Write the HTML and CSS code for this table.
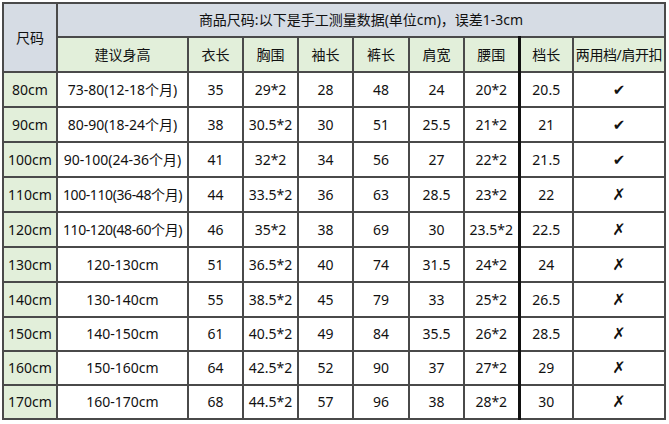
FILE: index.html
```html
<!DOCTYPE html>
<html lang="zh-CN">
<head>
<meta charset="utf-8">
<title>尺码表</title>
<link rel="stylesheet" href="styles.css">
</head>
<body>
<table class="size-table">
  <colgroup>
    <col class="c-size">
    <col class="c-height">
    <col class="c-n"><col class="c-n"><col class="c-n"><col class="c-n5">
    <col class="c-n"><col class="c-n"><col class="c-n8">
    <col class="c-opt">
  </colgroup>
  <thead>
    <tr class="r-title">
      <th rowspan="2" class="h-gray">尺码</th>
      <th colspan="9" class="h-gray title">商品尺码:以下是手工测量数据(单位cm)，误差1-3cm</th>
    </tr>
    <tr class="r-head">
      <th class="h-green">建议身高</th>
      <th class="h-green">衣长</th>
      <th class="h-green">胸围</th>
      <th class="h-green">袖长</th>
      <th class="h-green">裤长</th>
      <th class="h-green">肩宽</th>
      <th class="h-green">腰围</th>
      <th class="h-green thick">档长</th>
      <th class="h-green tight">两用档/肩开扣</th>
    </tr>
  </thead>
  <tbody>
    <tr><td class="size">80cm</td><td>73-80(12-18个月)</td><td>35</td><td>29*2</td><td>28</td><td>48</td><td>24</td><td>20*2</td><td class="thick">20.5</td><td class="mark check">✔</td></tr>
    <tr><td class="size">90cm</td><td>80-90(18-24个月)</td><td>38</td><td>30.5*2</td><td>30</td><td>51</td><td>25.5</td><td>21*2</td><td class="thick">21</td><td class="mark check">✔</td></tr>
    <tr><td class="size">100cm</td><td>90-100(24-36个月)</td><td>41</td><td>32*2</td><td>34</td><td>56</td><td>27</td><td>22*2</td><td class="thick">21.5</td><td class="mark check">✔</td></tr>
    <tr><td class="size">110cm</td><td class="tight">100-110(36-48个月)</td><td>44</td><td>33.5*2</td><td>36</td><td>63</td><td>28.5</td><td>23*2</td><td class="thick">22</td><td class="mark">✗</td></tr>
    <tr><td class="size">120cm</td><td class="tight">110-120(48-60个月)</td><td>46</td><td>35*2</td><td>38</td><td>69</td><td>30</td><td>23.5*2</td><td class="thick">22.5</td><td class="mark">✗</td></tr>
    <tr><td class="size">130cm</td><td>120-130cm</td><td>51</td><td>36.5*2</td><td>40</td><td>74</td><td>31.5</td><td>24*2</td><td class="thick">24</td><td class="mark">✗</td></tr>
    <tr><td class="size">140cm</td><td>130-140cm</td><td>55</td><td>38.5*2</td><td>45</td><td>79</td><td>33</td><td>25*2</td><td class="thick">26.5</td><td class="mark">✗</td></tr>
    <tr class="r-short"><td class="size">150cm</td><td>140-150cm</td><td>61</td><td>40.5*2</td><td>49</td><td>84</td><td>35.5</td><td>26*2</td><td class="thick">28.5</td><td class="mark">✗</td></tr>
    <tr class="r-short"><td class="size">160cm</td><td>150-160cm</td><td>64</td><td>42.5*2</td><td>52</td><td>90</td><td>37</td><td>27*2</td><td class="thick">29</td><td class="mark">✗</td></tr>
    <tr class="r-short"><td class="size">170cm</td><td>160-170cm</td><td>68</td><td>44.5*2</td><td>57</td><td>96</td><td>38</td><td>28*2</td><td class="thick">30</td><td class="mark">✗</td></tr>
  </tbody>
</table>
</body>
</html>
```
FILE: styles.css
```css
html, body {
  margin: 0;
  padding: 0;
  background: #ffffff;
}

body {
  padding: 2px 0 0 2px;
  font-family: "Noto Sans", "Noto Sans CJK SC", sans-serif;
  color: #111111;
}

.size-table {
  border-collapse: collapse;
  table-layout: fixed;
  width: 663px;
  font-size: 14px;
}

.c-size { width: 54px; }
.c-height { width: 131px; }
.c-n { width: 55px; }
.c-n5 { width: 56px; }
.c-n8 { width: 54px; }
.c-opt { width: 92px; }

.size-table th,
.size-table td {
  border: 2px solid #4a4a4a;
  padding: 0;
  text-align: center;
  vertical-align: middle;
  font-weight: normal;
  white-space: nowrap;
  overflow: hidden;
  line-height: 18px;
}

.r-title { height: 34px; }
.r-head { height: 35px; }
tbody tr { height: 35px; }
tbody tr.r-short { height: 34px; }

.h-gray { background: #d6dce4; }
.h-green { background: #e2efda; }
.size { background: #e2efda; }

.size-table .thick { border-left: 3px solid #111111; }

.tight { letter-spacing: -0.4px; }

.mark {
  font-family: "DejaVu Sans", sans-serif;
  font-size: 16px;
  font-weight: bold;
}

.size-table .check {
  font-size: 15px;
  font-weight: normal;
}
```
